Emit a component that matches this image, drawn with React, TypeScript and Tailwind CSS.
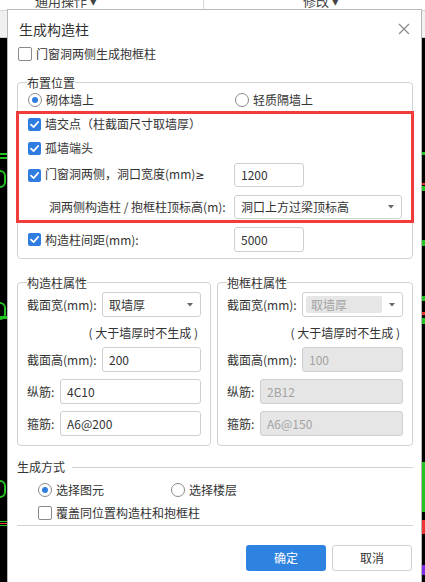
import React from "react";

const Check = ({ checked }: { checked?: boolean }) =>
  checked ? (
    <span className="w-[13px] h-[13px] rounded-[2px] bg-[#2f7de1] flex items-center justify-center shrink-0">
      <svg viewBox="0 0 13 13" className="w-[13px] h-[13px]">
        <path d="M3 6.6 L5.6 9.1 L10.2 3.9" stroke="white" strokeWidth="1.7" fill="none" strokeLinecap="round" strokeLinejoin="round" />
      </svg>
    </span>
  ) : (
    <span className="w-[14px] h-[14px] rounded-[2px] border border-[#8a8a8a] bg-white shrink-0" />
  );

const Radio = ({ checked }: { checked?: boolean }) => (
  <span className="w-[14px] h-[14px] rounded-full border border-[#8a8a8a] bg-white flex items-center justify-center shrink-0">
    {checked && <span className="w-[6px] h-[6px] rounded-full bg-[#2f7de1]" />}
  </span>
);

const Caret = () => (
  <svg viewBox="0 0 6 4" className="w-[6px] h-[4px] shrink-0">
    <path d="M0 0 L6 0 L3 3.5 Z" fill="#666" />
  </svg>
);

const Input = ({ value, className = "", disabled }: { value: string; className?: string; disabled?: boolean }) => (
  <div
    className={`h-full border border-[#cfcfcf] rounded-[3px] flex items-center pl-[6px] text-[12px] ${
      disabled ? "bg-[#e6e6e6] text-[#a3a3a3]" : "bg-white text-[#333]"
    } ${className}`}
  >
    {value}
  </div>
);

const Select = ({ value, className = "", disabled }: { value: string; className?: string; disabled?: boolean }) => (
  <div className={`h-full border border-[#cfcfcf] rounded-[3px] bg-white flex items-center ${className}`}>
    {disabled ? (
      <div className="ml-[3px] my-[3px] self-stretch flex-1 bg-[#e6e6e6] rounded-[2px] flex items-center pl-[5px] text-[12px] text-[#a3a3a3]">
        {value}
      </div>
    ) : (
      <div className="flex-1 pl-[6px] text-[12px] text-[#333]">{value}</div>
    )}
    <div className="w-[20px] flex justify-center">
      <Caret />
    </div>
  </div>
);

const Group = ({ title, disabled, className = "" }: { title: string; disabled?: boolean; className?: string }) => {
  const v = disabled
    ? { w: "取墙厚", h: "100", z: "2B12", g: "A6@150" }
    : { w: "取墙厚", h: "200", z: "4C10", g: "A6@200" };
  return (
    <fieldset className={`border border-[#d2d2d2] rounded-[4px] pl-[9px] pr-[9px] pb-[9px] ${className}`}>
      <legend className="text-[12px] leading-[17px] text-[#333]">{title}</legend>
      <div className="mt-[1px] h-[25px] flex items-center">
        <span className="w-[75px] shrink-0">截面宽(mm):</span>
        <Select value={v.w} disabled={disabled} className="flex-1" />
      </div>
      <div className="mt-[8px] h-[16px] flex items-center justify-end pr-[3px] text-[12px]">( 大于墙厚时不生成 )</div>
      <div className="mt-[6px] h-[25px] flex items-center">
        <span className="w-[75px] shrink-0">截面高(mm):</span>
        <Input value={v.h} disabled={disabled} className="flex-1" />
      </div>
      <div className="mt-[7px] h-[25px] flex items-center">
        <span className="w-[33px] shrink-0">纵筋:</span>
        <Input value={v.z} disabled={disabled} className="flex-1" />
      </div>
      <div className="mt-[7px] h-[25px] flex items-center">
        <span className="w-[33px] shrink-0">箍筋:</span>
        <Input value={v.g} disabled={disabled} className="flex-1" />
      </div>
    </fieldset>
  );
};

export default function App() {
  return (
    <div className="relative w-[425px] h-[582px] overflow-hidden bg-black font-['Noto_Sans_CJK_SC','Microsoft_YaHei',sans-serif] text-[12px] text-[#333]">
      {/* background application */}
      <div className="h-[11px] bg-white border-b border-[#d6d6d6] flex overflow-hidden">
        <div className="w-[204px] border-r border-[#d6d6d6] flex pl-[35px]">
          <span className="-mt-[9px] text-[13px] text-[#444]">通用操作 ▾</span>
        </div>
        <div className="flex-1 flex pl-[99px]">
          <span className="-mt-[9px] text-[13px] text-[#444]">修改 ▾</span>
        </div>
      </div>
      <div className="h-[27px] bg-[#f0f0f0] border-b border-[#c8c8c8]" />
      {/* CAD canvas marks */}
      <div className="absolute left-0 top-[153px] w-[7px] h-[2px] bg-[#22c322]" />
      <div className="absolute left-0 top-[157px] w-[7px] h-[2px] bg-[#22c322]" />
      <div className="absolute -left-[6px] top-[170px] w-[12px] h-[18px] rounded-full border-2 border-[#22c322]" />
      <div className="absolute -left-[6px] top-[302px] w-[12px] h-[18px] rounded-full border-2 border-[#22c322]" />
      <div className="absolute left-0 top-[316px] w-[7px] h-[3px] bg-[#22c322]" />
      <div className="absolute -left-[6px] top-[480px] w-[12px] h-[18px] rounded-full border-2 border-[#22c322]" />
      <div className="absolute left-0 top-[521px] w-[7px] h-[1px] bg-[#22c322]" />
      <div className="absolute left-0 top-[523px] w-[7px] h-[1px] bg-[#e33]" />
      <div className="absolute left-0 top-[525px] w-[7px] h-[1px] bg-[#22c322]" />
      <div className="absolute right-0 top-[152px] w-[4px] h-[3px] bg-[#22c322]" />
      <div className="absolute right-0 top-[183px] w-[4px] h-[2px] bg-[#e33]" />
      <div className="absolute right-0 top-[186px] w-[4px] h-[5px] bg-[#22c322]" />
      <div className="absolute right-0 top-[240px] w-[4px] h-[6px] bg-[#22c322]" />
      <div className="absolute right-0 top-[296px] w-[4px] h-[5px] bg-[#22c322]" />
      <div className="absolute right-0 top-[312px] w-[4px] h-[3px] bg-[#e33]" />
      <div className="absolute right-0 top-[318px] w-[4px] h-[6px] bg-[#22c322]" />
      <div className="absolute right-0 top-[462px] w-[4px] h-[50px] bg-[#22c322]" />
      <div className="absolute right-0 top-[520px] w-[4px] h-[14px] bg-[#e33]" />
      <div className="absolute right-0 top-[565px] w-[4px] h-[10px] bg-[#7a2ee8]" />

      {/* dialog */}
      <div className="absolute left-[7px] top-[9px] w-[415px] h-[600px] bg-white border border-[#b8b8b8] flex flex-col">
        <div className="h-[36px] pt-[2px] pl-[11px] pr-[11px] flex items-center justify-between">
          <span className="text-[14px] text-[#333]">生成构造柱</span>
          <svg viewBox="0 0 12 12" className="w-[12px] h-[12px] -mt-[1px]">
            <path d="M1 1 L11 11 M11 1 L1 11" stroke="#8a8a8a" strokeWidth="1.2" />
          </svg>
        </div>
        <div className="h-[16px] pl-[10px] flex items-center gap-[4px]">
          <Check />
          <span>门窗洞两侧生成抱框柱</span>
        </div>

        <div className="pl-[9px] pr-[8px]">
          <fieldset className="mt-[12px] border border-[#d2d2d2] rounded-[4px] pb-[6px]">
            <legend className="ml-[9px] text-[12px] leading-[17px]">布置位置</legend>
            <div className="h-[18px] pl-[10px] flex items-center">
              <div className="w-[207px] flex items-center gap-[4px]">
                <Radio checked />
                <span>砌体墙上</span>
              </div>
              <div className="flex items-center gap-[4px]">
                <Radio />
                <span>轻质隔墙上</span>
              </div>
            </div>
            <div className="mt-[2px] -mx-[2px] border-[3px] border-[#f23c3c] pl-[9px] pb-[1px]">
              <div className="h-[20px] flex items-center gap-[4px]">
                <Check checked />
                <span>墙交点（柱截面尺寸取墙厚）</span>
              </div>
              <div className="mt-[4px] h-[20px] flex items-center gap-[4px]">
                <Check checked />
                <span>孤墙端头</span>
              </div>
              <div className="mt-[5px] h-[24px] flex items-center">
                <div className="w-[206px] flex items-center gap-[4px]">
                  <Check checked />
                  <span>
                    门窗洞两侧，洞口宽度(mm)<span className="font-['DejaVu_Sans',sans-serif] text-[11px]">≥</span>
                  </span>
                </div>
                <Input value="1200" className="w-[70px]" />
              </div>
              <div className="mt-[8px] h-[24px] flex items-center">
                <div className="w-[206px] pl-[21px]">洞两侧构造柱 / 抱框柱顶标高(m):</div>
                <Select value="洞口上方过梁顶标高" className="w-[168px]" />
              </div>
            </div>
            <div className="mt-[4px] h-[25px] pl-[10px] flex items-center">
              <div className="w-[206px] flex items-center gap-[4px]">
                <Check checked />
                <span>构造柱间距(mm):</span>
              </div>
              <Input value="5000" className="w-[70px]" />
            </div>
          </fieldset>

          <div className="mt-[15px] flex gap-[6px]">
            <Group title="构造柱属性" className="w-[194px]" />
            <Group title="抱框柱属性" disabled className="flex-1" />
          </div>

          <div className="mt-[12px] h-[18px] flex items-center">
            <span>生成方式</span>
            <div className="ml-[7px] flex-1 h-px bg-[#d2d2d2]" />
          </div>
          <div className="mt-[5px] h-[18px] pl-[21px] flex items-center">
            <div className="w-[133px] flex items-center gap-[4px]">
              <Radio checked />
              <span>选择图元</span>
            </div>
            <div className="flex items-center gap-[4px]">
              <Radio />
              <span>选择楼层</span>
            </div>
          </div>
          <div className="mt-[6px] h-[16px] pl-[21px] flex items-center gap-[4px]">
            <Check />
            <span>覆盖同位置构造柱和抱框柱</span>
          </div>
          <div className="mt-[4px] h-px bg-[#d2d2d2]" />
          <div className="mt-[19px] flex justify-end gap-[6px] pr-[1px]">
            <button className="w-[80px] h-[26px] rounded-[3px] bg-[#2f83e0] text-white text-[12px]">确定</button>
            <button className="w-[80px] h-[26px] rounded-[3px] border border-[#cfcfcf] bg-white text-[#333] text-[12px]">取消</button>
          </div>
        </div>
      </div>
    </div>
  );
}
